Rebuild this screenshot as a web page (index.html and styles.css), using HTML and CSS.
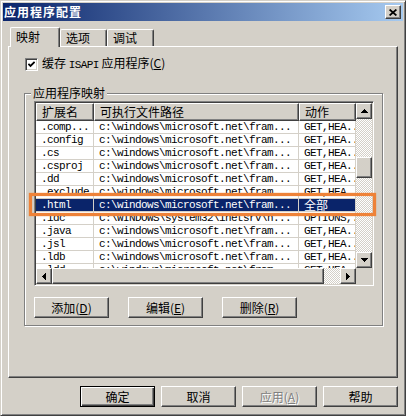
FILE: index.html
```html
<!DOCTYPE html>
<html>
<head>
    <meta charset="utf-8">
    <link rel="stylesheet" href="styles.css">
</head>
<body>
    <div class="window">
        <div class="titlebar">
            <span class="title">应用程序配置</span>
            <span class="closeButton">
                <svg width="8" height="7" viewBox="0 0 8 7"><path d="M0.6 0.5L7.4 6.5M7.4 0.5L0.6 6.5" stroke="#000" stroke-width="1.7"/></svg>
            </span>
        </div>

        <div class="client">
            <div class="tabs">
                <div class="tab tabActive">映射</div>
                <div class="tab">选项</div>
                <div class="tab">调试</div>
            </div>

            <div class="panel">
                <div class="checkRow">
                    <span class="checkbox">
                        <svg width="7" height="7" viewBox="0 0 7 7"><path d="M0.4 2.8L2.5 4.9L6.6 0.8" stroke="#000" stroke-width="1.8" fill="none"/></svg>
                    </span>
                    <span>缓存 <span class="lat">ISAPI</span> 应用程序(<u>C</u>)</span>
                </div>

                <div class="group">
                    <div class="groupLabel">应用程序映射</div>

                    <div class="listView">
                        <div class="listMain">
                            <div class="header">
                                <div class="headerCell colExt">扩展名</div>
                                <div class="headerCell colPath">可执行文件路径</div>
                                <div class="headerCell colVerb">动作</div>
                            </div>
                            <div class="row">
                                <div class="cell colExt">.comp...</div>
                                <div class="cell colPath">c:\windows\microsoft.net\fram...</div>
                                <div class="cell colVerb">GET,HEA...</div>
                            </div>
                            <div class="row">
                                <div class="cell colExt">.config</div>
                                <div class="cell colPath">c:\windows\microsoft.net\fram...</div>
                                <div class="cell colVerb">GET,HEA...</div>
                            </div>
                            <div class="row">
                                <div class="cell colExt">.cs</div>
                                <div class="cell colPath">c:\windows\microsoft.net\fram...</div>
                                <div class="cell colVerb">GET,HEA...</div>
                            </div>
                            <div class="row">
                                <div class="cell colExt">.csproj</div>
                                <div class="cell colPath">c:\windows\microsoft.net\fram...</div>
                                <div class="cell colVerb">GET,HEA...</div>
                            </div>
                            <div class="row">
                                <div class="cell colExt">.dd</div>
                                <div class="cell colPath">c:\windows\microsoft.net\fram...</div>
                                <div class="cell colVerb">GET,HEA...</div>
                            </div>
                            <div class="row">
                                <div class="cell colExt">.exclude</div>
                                <div class="cell colPath">c:\windows\microsoft.net\fram...</div>
                                <div class="cell colVerb">GET,HEA...</div>
                            </div>
                            <div class="row rowSelected">
                                <div class="cell colExt">.html</div>
                                <div class="cell colPath">c:\windows\microsoft.net\fram...</div>
                                <div class="cell colVerb"><span class="zh">全部</span></div>
                            </div>
                            <div class="row">
                                <div class="cell colExt">.idc</div>
                                <div class="cell colPath">C:\WINDOWS\system32\inetsrv\h...</div>
                                <div class="cell colVerb">OPTIONS,...</div>
                            </div>
                            <div class="row">
                                <div class="cell colExt">.java</div>
                                <div class="cell colPath">c:\windows\microsoft.net\fram...</div>
                                <div class="cell colVerb">GET,HEA...</div>
                            </div>
                            <div class="row">
                                <div class="cell colExt">.jsl</div>
                                <div class="cell colPath">c:\windows\microsoft.net\fram...</div>
                                <div class="cell colVerb">GET,HEA...</div>
                            </div>
                            <div class="row">
                                <div class="cell colExt">.ldb</div>
                                <div class="cell colPath">c:\windows\microsoft.net\fram...</div>
                                <div class="cell colVerb">GET,HEA...</div>
                            </div>
                            <div class="row">
                                <div class="cell colExt">.ldd</div>
                                <div class="cell colPath">c:\windows\microsoft.net\fram...</div>
                                <div class="cell colVerb">GET,HEA...</div>
                            </div>
                        </div>

                        <div class="vScroll">
                            <div class="scrollButton"><svg width="7" height="4" viewBox="0 0 7 4"><path d="M3 0h1v1h1v1h1v1h1v1H0V3h1V2h1V1h1z"/></svg></div>
                            <div class="thumb vThumb"></div>
                            <div class="scrollButton scrollEnd"><svg width="7" height="4" viewBox="0 0 7 4"><path d="M0 0h7v1H6v1H5v1H4v1H3V3H2V2H1V1H0z"/></svg></div>
                        </div>

                        <div class="hScroll">
                            <div class="scrollButton"><svg width="4" height="7" viewBox="0 0 4 7"><path d="M3 0h1v7H3V6H2V5H1V4H0V3h1V2h1V1h1z"/></svg></div>
                            <div class="thumb hThumb"></div>
                            <div class="scrollButton"><svg width="4" height="7" viewBox="0 0 4 7"><path d="M0 0h1v1h1v1h1v1h1v1H3v1H2v1H1v1H0z"/></svg></div>
                        </div>

                        <div class="corner"></div>

                        <!-- annotation drawn over the selected mapping -->
                        <div class="callout"></div>
                    </div>

                    <div class="groupButtons">
                        <div class="button">添加(<u>D</u>)</div>
                        <div class="button">编辑(<u>E</u>)</div>
                        <div class="button">删除(<u>R</u>)</div>
                    </div>
                </div>
            </div>

            <div class="dialogButtons">
                <div class="button buttonDefault">确定</div>
                <div class="button">取消</div>
                <div class="button buttonDisabled">应用(<u>A</u>)</div>
                <div class="button">帮助</div>
            </div>
        </div>
    </div>
</body>
</html>
```

FILE: styles.css
```css
* {
    box-sizing: border-box;
}

body {
    margin: 0;
    background-color: #d4d0c8;
    color: #000000;
    font: 12px/14px "Noto Sans CJK SC", sans-serif;
}

.lat {
    font-family: "Liberation Mono", monospace;
    font-size: 11px;
    letter-spacing: -0.6px;
}

.window {
    width: 406px;
    height: 416px;
    padding: 2px;
    display: flex;
    flex-direction: column;
    background-color: #d4d0c8;
    border: 1px solid;
    border-color: #d4d0c8 #404040 #404040 #d4d0c8;
    box-shadow: inset 1px 1px #ffffff, inset -1px -1px #808080;
}

.titlebar {
    height: 18px;
    flex: none;
    display: flex;
    align-items: center;
    justify-content: space-between;
    padding: 0 2px 0 1px;
    background: linear-gradient(to right, #0a246a, #a6caf0);
}

.title {
    color: #ffffff;
    font-weight: bold;
    letter-spacing: 1px;
    line-height: 18px;
}

/* classic raised bevel */
.closeButton, .button, .scrollButton, .thumb, .headerCell {
    background-color: #d4d0c8;
    border: 1px solid;
    border-color: #ffffff #404040 #404040 #ffffff;
    box-shadow: inset -1px -1px #808080;
}

.closeButton {
    width: 16px;
    height: 14px;
    display: flex;
    align-items: center;
    justify-content: center;
}

.client {
    flex: 1;
    padding: 6px 5px 0 5px;
}

.tabs {
    height: 19px;
    display: flex;
    align-items: flex-end;
    padding-left: 2px;
}

.tab {
    width: 47px;
    height: 17px;
    padding-left: 5px;
    line-height: 16px;
    border: 1px solid;
    border-bottom: none;
    border-color: #ffffff #404040 #404040 #ffffff;
    border-radius: 2px 2px 0 0;
    box-shadow: inset -1px 0 #808080;
}

.tabActive {
    position: relative;
    width: 50px;
    height: 20px;
    margin-bottom: -1px;
    line-height: 17px;
    background-color: #d4d0c8;
}

.panel {
    height: 332px;
    padding: 10px 14px 0 15px;
    border: 1px solid;
    border-color: #ffffff #404040 #404040 #ffffff;
    box-shadow: inset -1px -1px #808080;
}

.checkRow {
    height: 14px;
    display: flex;
    align-items: center;
    gap: 4px;
    padding-left: 1px;
}

.checkbox {
    width: 13px;
    height: 13px;
    display: flex;
    align-items: center;
    justify-content: center;
    background-color: #ffffff;
    border: 1px solid;
    border-color: #808080 #ffffff #ffffff #808080;
    box-shadow: inset 1px 1px #404040, inset -1px -1px #d4d0c8;
}

.group {
    margin-top: 22px;
    padding: 0 8px 7px 9px;
    border: 1px solid #808080;
    box-shadow: inset 1px 1px #ffffff, 1px 1px #ffffff;
}

.groupLabel {
    width: fit-content;
    margin: -8px 0 0 -3px;
    padding: 0 2px;
    background-color: #d4d0c8;
}

.listView {
    position: relative;
    height: 185px;
    margin-top: 1px;
    padding: 1px;
    display: grid;
    grid-template-columns: 1fr 16px;
    grid-template-rows: 1fr 16px;
    border: 1px solid;
    border-color: #808080 #ffffff #ffffff #808080;
    box-shadow: inset 1px 1px #404040, inset -1px -1px #d4d0c8;
}

.listMain {
    overflow: hidden;
    background-color: #ffffff;
}

.header {
    height: 18px;
    display: flex;
}

.headerCell {
    padding-left: 5px;
    line-height: 15px;
}

.colExt {
    width: 58px;
    flex: none;
}

.colPath {
    width: 205px;
    flex: none;
}

.colVerb {
    width: 57px;
    flex: none;
}

.row {
    height: 13px;
    display: flex;
}

.cell {
    padding-left: 5px;
    overflow: hidden;
    white-space: nowrap;
    border-right: 1px solid #d4d0c8;
    border-bottom: 1px solid #d4d0c8;
    font-family: "Liberation Mono", monospace;
    font-size: 11px;
    letter-spacing: -0.6px;
    line-height: 12px;
}

.cell .zh {
    font-family: "Noto Sans CJK SC", sans-serif;
    font-size: 12px;
    letter-spacing: 0;
}

.rowSelected > .cell {
    background-color: #0a246a;
    color: #ffffff;
}

.vScroll, .hScroll {
    display: flex;
    background: repeating-conic-gradient(#ffffff 0 25%, #d4d0c8 0 50%) 0 0 / 2px 2px;
}

.vScroll {
    flex-direction: column;
}

.scrollButton {
    width: 16px;
    height: 16px;
    flex: none;
    display: flex;
    align-items: center;
    justify-content: center;
}

.scrollEnd {
    margin-top: auto;
}

.vThumb {
    height: 21px;
    margin-top: 38px;
}

.hThumb {
    flex: 1;
    margin-right: 16px;
}

.corner {
    background-color: #d4d0c8;
}

.callout {
    position: absolute;
    left: -6px;
    top: 91px;
    width: 347px;
    height: 23px;
    border: 3px solid #ee8238;
    box-shadow: 0 0 1px #ee8238, inset 0 0 1px #ee8238;
}

.groupButtons {
    display: flex;
    gap: 19px;
    margin-top: 11px;
}

.button {
    width: 75px;
    height: 21px;
    line-height: 19px;
    text-align: center;
}

.buttonDefault {
    border-color: #000000;
    box-shadow: inset 1px 1px #ffffff, inset -1px -1px #404040, inset -2px -2px #808080;
}

.buttonDisabled {
    color: #808080;
    text-shadow: 1px 1px #ffffff;
}

.dialogButtons {
    display: flex;
    justify-content: flex-end;
    gap: 6px;
    margin-top: 8px;
}
```
